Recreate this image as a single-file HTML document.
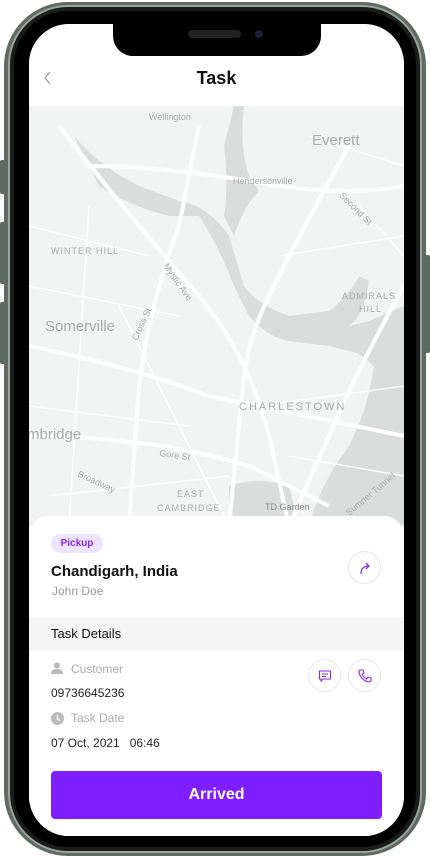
<!DOCTYPE html>
<html><head><meta charset="utf-8"><style>
*{margin:0;padding:0;box-sizing:border-box}
body{width:430px;height:860px;background:#fff;position:relative;overflow:hidden;font-family:"Liberation Sans",sans-serif}
.phone{position:absolute;left:4px;top:2px;width:422px;height:854px;border-radius:64px;background:#5d6b63;}
.phone2{position:absolute;left:8px;top:5px;width:414px;height:848px;border-radius:60px;background:#1a1d1c;border:2px solid #9aa59f}
.bezel{position:absolute;left:14px;top:11px;width:402px;height:836px;border-radius:54px;background:#000}
.screen{position:absolute;left:29px;top:24px;width:375px;height:812px;border-radius:40px;background:#fff;overflow:hidden}
.notch{position:absolute;left:113px;top:22px;width:208px;height:34px;background:#000;border-radius:0 0 20px 20px}
.btn{position:absolute;background:#5d6b63;border-radius:2px}
.hdr{position:absolute;top:0;left:0;width:375px;height:82px;background:#fff}
.t{position:absolute;top:44px;width:375px;text-align:center;font-weight:bold;font-size:18px;color:#111}
.map{position:absolute;top:82px;left:0;width:375px;height:420px;background:#f2f3f3}
.card{position:absolute;top:492px;left:0;width:375px;height:330px;background:#fff;border-radius:20px 20px 0 0}
.pill{position:absolute;left:22px;top:18px;width:52px;height:19px;border-radius:10px;background:#efe4fd;color:#8a2be2;font-size:10px;font-weight:bold;text-align:center;line-height:19px}
.circ{position:absolute;width:33px;height:33px;border-radius:50%;border:1px solid #e6e6e6;display:flex;align-items:center;justify-content:center}
.gray{color:#9a9a9a}
.arr{position:absolute;left:22px;top:255px;width:331px;height:48px;background:#7f1fff;border-radius:4px;color:#fff;font-weight:bold;font-size:16px;text-align:center;line-height:48px}
</style></head><body>
<div class="btn" style="left:0;top:160px;width:6px;height:34px"></div>
<div class="btn" style="left:0;top:222px;width:6px;height:62px"></div>
<div class="btn" style="left:0;top:302px;width:6px;height:62px"></div>
<div class="btn" style="right:0;top:255px;width:6px;height:98px"></div>
<div class="phone"></div><div class="phone2"></div><div class="bezel"></div>
<div class="screen">
 <div class="map">
 <svg width="375" height="420" viewBox="0 0 375 420">
  <g fill="#d9dedd">
   <path d="M45 30 Q70 60 110 80 L150 95 Q180 100 200 130 L215 180 Q230 200 260 210 L300 205 Q320 190 330 170 L340 175 Q335 210 320 220 L340 215 L375 200 L375 260 Q340 250 300 240 L260 235 Q240 232 220 210 L205 180 Q190 140 170 110 L140 110 Q100 100 70 80 Z"/>
   <path d="M205 0 L215 0 Q210 40 220 70 L230 85 Q215 100 205 130 L195 110 Q200 80 195 40 Z"/>
   <path d="M320 240 L375 225 L375 420 L280 420 Q290 380 320 340 Q340 300 345 260 Z"/>
   <path d="M200 380 Q230 370 260 380 L270 420 L200 420 Z"/>
  </g>
  <g stroke="#fff" fill="none" stroke-width="4">
   <path d="M30 20 Q100 110 170 190 Q220 250 240 330 L260 420"/>
   <path d="M170 20 L150 120 Q120 200 110 280 L100 420"/>
   <path d="M60 60 Q140 60 250 80 Q320 90 375 80"/>
   <path d="M320 40 Q280 110 240 190 Q220 230 215 270 L200 420"/>
   <path d="M375 180 Q330 260 300 330 L260 420"/>
   <path d="M0 240 Q100 260 180 290 L375 330"/>
   <path d="M0 330 Q120 330 220 360 L300 400"/>
  </g>
  <g stroke="#fff" fill="none" stroke-width="1.5" opacity=".9">
   <path d="M0 120 L120 150 M0 180 L150 210 M60 100 L40 420 M0 300 L160 320 M20 390 L200 370 M230 300 L375 280 M250 150 L375 130 M280 30 L375 60 M260 350 L375 370 M90 200 L200 420 M330 100 L375 150"/>
  </g>
  <g fill="#a9acad" font-family="Liberation Sans,sans-serif">
   <text x="120" y="14" font-size="9">Wellington</text>
   <text x="283" y="39" font-size="15">Everett</text>
   <text x="204" y="78" font-size="9">Hendersonville</text>
   <text x="22" y="148" font-size="9" letter-spacing="1">WINTER HILL</text>
   <text x="16" y="225" font-size="15">Somerville</text>
   <text x="313" y="193" font-size="9" letter-spacing="1">ADMIRALS</text>
   <text x="330" y="206" font-size="9" letter-spacing="1">HILL</text>
   <text x="210" y="304" font-size="11" letter-spacing="2">CHARLESTOWN</text>
   <text x="-2" y="333" font-size="15">mbridge</text>
   <text x="148" y="391" font-size="9" letter-spacing="1">EAST</text>
   <text x="128" y="405" font-size="9" letter-spacing="1">CAMBRIDGE</text>
   <text x="236" y="404" font-size="9" fill="#888">TD Garden</text>
   <text x="130" y="350" font-size="9" transform="rotate(8 130 350)">Gore St</text>
   <text x="48" y="370" font-size="9" transform="rotate(25 48 370)">Broadway</text>
   <text x="134" y="160" font-size="9" transform="rotate(55 134 160)">Mystic Ave</text>
   <text x="108" y="235" font-size="9" transform="rotate(-65 108 235)">Cross St</text>
   <text x="310" y="90" font-size="9" transform="rotate(45 310 90)">Second St</text>
   <text x="320" y="410" font-size="9" transform="rotate(-40 320 410)">Sumner Tunnel</text>
  </g>
 </svg>
 </div>
 <div class="hdr"><svg style="position:absolute;left:14px;top:47px" width="10" height="14"><path d="M7 1 L2 7 L7 13" stroke="#999" fill="none" stroke-width="1.2"/></svg><div class="t">Task</div></div>
 <div class="card">
  <div class="pill">Pickup</div>
  <div style="position:absolute;left:22px;top:47px;font-size:15px;font-weight:bold;color:#111">Chandigarh, India</div>
  <div class="gray" style="position:absolute;left:23px;top:68px;font-size:12px">John Doe</div>
  <div class="circ" style="left:319px;top:35px"><svg width="14" height="14"><path d="M3 13 Q3 5 11 5 M8 2 L11 5 L8 8" stroke="#8a2be2" fill="none" stroke-width="1.3"/></svg></div>
  <div style="position:absolute;left:0;top:101px;width:375px;height:34px;background:#f5f5f5;font-size:13px;color:#111;padding:9px 22px">Task Details</div>
  <svg style="position:absolute;left:22px;top:146px" width="12" height="12"><circle cx="6" cy="3.5" r="3" fill="#bbb"/><path d="M0 12 Q0 7 6 7 Q12 7 12 12Z" fill="#bbb"/></svg>
  <div class="gray" style="position:absolute;left:42px;top:146px;font-size:12px;color:#aaa">Customer</div>
  <div style="position:absolute;left:22px;top:170px;font-size:12px;color:#222">09736645236</div>
  <svg style="position:absolute;left:22px;top:196px" width="13" height="13"><circle cx="6.5" cy="6.5" r="6.5" fill="#bbb"/><path d="M6.5 3 V7 L9 8.5" stroke="#fff" fill="none" stroke-width="1.3"/></svg>
  <div style="position:absolute;left:42px;top:195px;font-size:12px;color:#aaa">Task Date</div>
  <div style="position:absolute;left:22px;top:220px;font-size:12px;color:#222">07 Oct, 2021 &nbsp;&nbsp;06:46</div>
  <div class="circ" style="left:279px;top:143px"><svg width="14" height="14"><path d="M1.5 2 H12.5 V10 H5 L3 12 V10 H1.5Z M4 5 H10 M4 7.5 H8" stroke="#8a2be2" fill="none" stroke-width="1.1"/></svg></div>
  <div class="circ" style="left:319px;top:143px"><svg width="16" height="16"><path d="M3 2 L6 2 L7 5 L5 6.5 Q7 9.5 9.5 11 L11 9 L14 10 L14 13 Q13 14 11 14 Q3 11 2 4 Q2 2.5 3 2Z" stroke="#8a2be2" fill="none" stroke-width="1.1"/></svg></div>
  <div class="arr">Arrived</div>
 </div>
</div>
<div class="notch"></div>
<div style="position:absolute;left:188px;top:30px;width:53px;height:8px;border-radius:4px;background:#222"></div>
<div style="position:absolute;left:255px;top:30px;width:8px;height:8px;border-radius:50%;background:#1a1f3a"></div>
</body></html>
